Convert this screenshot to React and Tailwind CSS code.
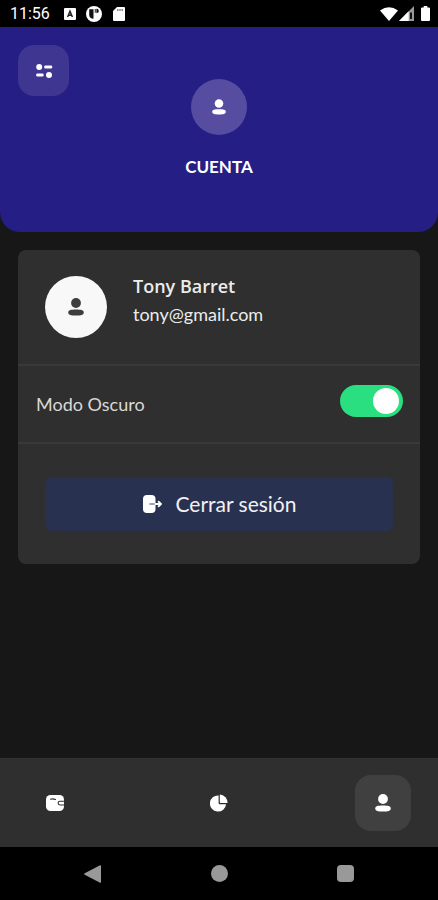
import React, { useState } from 'react';

const UserIcon = ({ className }) => (
    <svg viewBox="0 0 16 18" className={className} fill="currentColor" aria-hidden="true">
        <circle cx="8" cy="5" r="4.9" />
        <path d="M8 11.5c5 0 7.8.6 7.8 3S13 17.6 8 17.6.2 16.9.2 14.5 3 11.5 8 11.5Z" />
    </svg>
);

const OptionsIcon = () => (
    <svg viewBox="0 0 18 16" className="h-4 w-[18px]" fill="currentColor" aria-hidden="true">
        <circle cx="4.2" cy="4" r="3" />
        <rect x="9.2" y="2.6" width="8" height="2.8" rx="1.2" />
        <rect x="1.2" y="10.6" width="7.4" height="2.8" rx="1.2" />
        <circle cx="14" cy="12" r="3" />
    </svg>
);

const LogoutIcon = () => (
    <svg viewBox="0 0 20 20" className="size-5" aria-hidden="true">
        <rect x="1" y="1" width="12.5" height="18" rx="4" fill="#fff" />
        <path d="M8 10h5.5" stroke="#7d8296" strokeWidth="1.5" strokeLinecap="round" />
        <path d="M13.5 10h5M16.6 7.6 19 10l-2.4 2.4" fill="none" stroke="#fff" strokeWidth="1.8" strokeLinecap="round" strokeLinejoin="round" />
    </svg>
);

const WalletIcon = () => (
    <svg viewBox="0 0 18 16" className="h-4 w-[18px]" aria-hidden="true">
        <rect width="18" height="16" rx="4.5" fill="#fff" />
        <path d="M4.5 4.2q2.5-.8 5 .4" fill="none" stroke="#2f2f2f" strokeWidth="1.1" strokeLinecap="round" />
        <path d="M18 6.2h-4a1.9 1.9 0 0 0 0 3.8h4" fill="none" stroke="#2f2f2f" strokeWidth="1.1" />
    </svg>
);

const ChartIcon = () => (
    <svg viewBox="0 0 18 18" className="size-[18px]" fill="#fff" aria-hidden="true">
        <path d="M8.6 1.4a8.1 8.1 0 1 0 7.5 8.8H9.8a1.2 1.2 0 0 1-1.2-1.2Z" />
        <path d="M9.8.4v7.6c0 .6.4 1 1 1h6.8A8.4 8.4 0 0 0 9.8.4Z" />
    </svg>
);

const StatusBar = () => (
    <div className="flex h-[27px] items-center justify-between bg-black pl-[10px] pr-2 text-white">
        <div className="flex items-center pt-px">
            <span className="mr-[14px] font-[Roboto] text-base">11:56</span>
            <svg viewBox="0 0 12 12" className="mr-[10px] size-3" aria-hidden="true">
                <rect width="12" height="12" rx="1" fill="#fff" />
                <path d="M3.6 9 6 3.2 8.4 9M4.5 7.2h3" fill="none" stroke="#222" strokeWidth="1.5" />
            </svg>
            <svg viewBox="0 0 16 16" className="mr-[11px] size-4" aria-hidden="true">
                <circle cx="8" cy="8" r="8" fill="#fff" />
                <path d="M3.2 3.2h4.3v9.6c-2.6 0-4.3-1.6-4.3-4ZM8.8 3h.9v3.7h-.9ZM10.4 2.8a2.2 2.2 0 0 1 2.4 2.1 2.1 2.1 0 0 1-2.4 2Z" fill="#111" />
            </svg>
            <svg viewBox="0 0 12 14" className="h-[14px] w-3" aria-hidden="true">
                <path d="M4 0h7q1 0 1 1v12q0 1-1 1H1q-1 0-1-1V4Z" fill="#fff" />
                <path d="M4.8 2v2M7 2v2M9.2 2v2" stroke="#555" strokeWidth="1" />
            </svg>
        </div>
        <div className="flex items-center">
            <svg viewBox="0 0 18 14" className="mr-px h-[14px] w-[18px]" fill="#fff" aria-hidden="true">
                <path d="M0 3.5Q9-3.2 18 3.5L9 14Z" />
            </svg>
            <svg viewBox="0 0 15 15" className="mr-[7px] size-[15px]" aria-hidden="true">
                <path d="M15 0v15H0Z" fill="#999" />
                <path d="M9.7 5.3V15H0Z" fill="#fff" />
                <path d="M11 6.5h2V13h-2Z" fill="#111" />
            </svg>
            <svg viewBox="0 0 9 15" className="h-[15px] w-[9px]" fill="#fff" aria-hidden="true">
                <path d="M2.7 0h3.6v1.6H8q1 0 1 1V14q0 1-1 1H1q-1 0-1-1V2.6q0-1 1-1h1.7Z" />
            </svg>
        </div>
    </div>
);

const Header = () => (
    <header className="grid grid-cols-3 items-start rounded-b-[20px] bg-[#241e85] px-[18px] pb-[53px] pt-[18px] text-white">
        <button type="button" aria-label="Opciones" className="flex size-[51px] items-center justify-center rounded-2xl bg-[#3e3691]">
            <OptionsIcon />
        </button>
        <div className="flex flex-col items-center pt-[34px]">
            <div className="flex size-14 items-center justify-center rounded-full bg-[#564da1]">
                <UserIcon className="h-4 w-[14px]" />
            </div>
            <h1 className="mt-5 text-[17px] leading-6 font-bold">CUENTA</h1>
        </div>
    </header>
);

const AccountCard = () => {
    const [darkMode, setDarkMode] = useState(true);

    return (
        <section className="mx-[18px] mt-[18px] divide-y-2 divide-[#393939] rounded-lg bg-[#2f2f2f]">
            <div className="flex items-start gap-[26px] px-[27px] py-[26px]">
                <div className="flex size-[62px] shrink-0 items-center justify-center rounded-full bg-[#f8f8f8] text-[#3d3d3d]">
                    <UserIcon className="h-[18px] w-4" />
                </div>
                <div className="text-lg leading-5 text-[#ececec]">
                    <p className="font-['Open_Sans'] font-semibold">Tony Barret</p>
                    <p className="mt-2">tony@gmail.com</p>
                </div>
            </div>

            <div className="flex items-start justify-between pb-[25px] pl-[18px] pr-[17px] pt-[19px]">
                <label htmlFor="dark-mode" className="pt-[7px] text-lg leading-6 text-[#d8d8d8]">Modo Oscuro</label>
                <input
                    id="dark-mode"
                    type="checkbox"
                    role="switch"
                    checked={darkMode}
                    onChange={(e) => setDarkMode(e.target.checked)}
                    className="flex h-8 w-[63px] cursor-pointer appearance-none items-center rounded-full bg-[#555] px-1 before:size-[26px] before:rounded-full before:bg-white checked:justify-end checked:bg-[#29df80]"
                />
            </div>

            <div className="px-[27px] py-[33px]">
                <button type="button" className="flex h-[54px] w-full items-center justify-center gap-[14px] rounded-md bg-[#293150] text-[21px] text-[#f1f1f5]">
                    <LogoutIcon />
                    Cerrar sesión
                </button>
            </div>
        </section>
    );
};

const navItems = [
    { label: 'Cartera', icon: <WalletIcon /> },
    { label: 'Estadísticas', icon: <ChartIcon /> },
    { label: 'Cuenta', icon: <UserIcon className="h-[18px] w-4" />, active: true },
];

const TabBar = () => (
    <nav className="mt-auto flex justify-between border-t border-[#333] bg-[#2f2f2f] px-[27px] py-4 text-white">
        {navItems.map((item) => (
            <button
                key={item.label}
                type="button"
                aria-label={item.label}
                className={`flex size-14 items-center justify-center rounded-2xl ${item.active ? 'bg-[#404040]' : ''}`}
            >
                {item.icon}
            </button>
        ))}
    </nav>
);

const SystemBar = () => (
    <div className="flex h-[53px] items-center justify-between bg-black px-[84px]">
        <button type="button" aria-label="Atrás">
            <svg viewBox="0 0 17 18" className="h-[18px] w-[17px]" fill="#999" aria-hidden="true">
                <path d="M15.6.4Q17-.2 17 1v16q0 1.2-1.4.6L.7 9.7Q-.3 9 .7 8.3Z" />
            </svg>
        </button>
        <button type="button" aria-label="Inicio" className="size-[17px] rounded-full bg-[#999]" />
        <button type="button" aria-label="Recientes" className="size-[17px] rounded-sm bg-[#999]" />
    </div>
);

export default function App() {
    return (
        <div className="flex min-h-screen flex-col bg-[#171717] font-[Lato,sans-serif]">
            <StatusBar />
            <Header />
            <main className="pb-[18px]">
                <AccountCard />
            </main>
            <TabBar />
            <SystemBar />
        </div>
    );
}
